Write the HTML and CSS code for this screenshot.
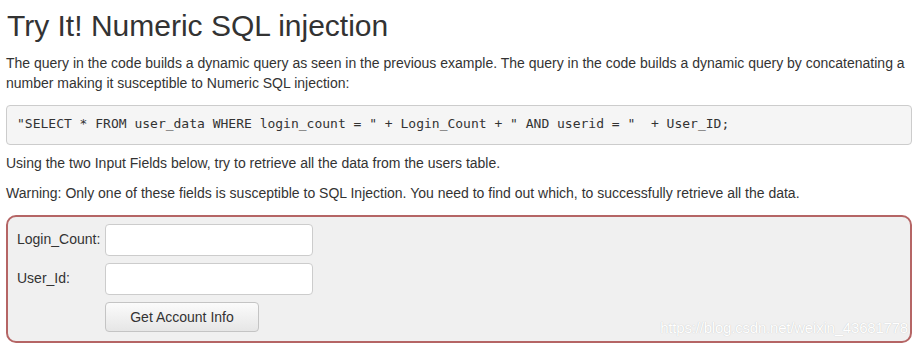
FILE: index.html
```html
<!DOCTYPE html>
<html lang="en">
<head>
  <meta charset="UTF-8" />
  <title>Numeric SQL injection</title>
  <link rel="stylesheet" href="styles.css">
</head>
<body>

<div class="lesson">
  <h2>Try It! Numeric SQL injection</h2>
  <p>The query in the code builds a dynamic query as seen in the previous example. The query in the code builds a dynamic query by concatenating a number making it susceptible to Numeric SQL injection:</p>

  <pre>"SELECT * FROM user_data WHERE login_count = " + Login_Count + " AND userid = "  + User_ID;</pre>

  <p>Using the two Input Fields below, try to retrieve all the data from the users table.</p>
  <p>Warning: Only one of these fields is susceptible to SQL Injection. You need to find out which, to successfully retrieve all the data.</p>

  <div class="attack-container">
    <form class="attack-form">
      <label for="login-count">Login_Count:</label>
      <input type="text" id="login-count" name="login_count" />
      <label for="user-id">User_Id:</label>
      <input type="text" id="user-id" name="userid" />
      <span></span>
      <input type="submit" value="Get Account Info" />
    </form>
    <!-- watermark from the screenshot -->
    <span class="watermark">https://blog.csdn.net/weixin_43681778</span>
  </div>
</div>

</body>
</html>
```

FILE: styles.css
```css
body {
  margin: 0;
  padding: 0;
  background: white;
  color: #333;
  font-family: 'Liberation Sans', Arial, sans-serif;
  font-size: 14px;
  line-height: 1.42857;
}
.lesson {
  padding: 0 6px;
}
h2 {
  font-size: 30px;
  font-weight: normal;
  line-height: 1.1;
  margin: 9px 0 12px 1px;
}
p {
  margin: 0 0 10px;
}
pre {
  font-family: 'DejaVu Sans Mono', monospace;
  font-size: 13px;
  line-height: 1.42857;
  background: #f5f5f5;
  border: 1px solid #ccc;
  border-radius: 4px;
  padding: 9.5px 10px;
  margin: 11px 0 9px;
  color: #333;
}
.attack-container {
  position: relative;
  background: #f0f0f0;
  border: 2px solid #b56565;
  border-radius: 10px;
  padding: 7px 8px 9px;
  margin-top: 11px;
}
.attack-form {
  display: grid;
  grid-template-columns: 85px 208px;
  column-gap: 4px;
  row-gap: 7px;
  align-items: center;
}
.attack-form label {
  padding-left: 1px;
}
.attack-form input[type="text"] {
  box-sizing: border-box;
  height: 32px;
  border: 1px solid #ccc;
  border-radius: 4px;
  background: white;
  padding: 6px 10px;
  font-family: inherit;
  font-size: 14px;
}
.attack-form input[type="submit"] {
  box-sizing: border-box;
  width: 154px;
  height: 30px;
  border: 1px solid #c4c4c4;
  border-radius: 4px;
  background: linear-gradient(#fbfbfb, #e6e6e6);
  color: #333;
  font-family: inherit;
  font-size: 14px;
}
.watermark {
  position: absolute;
  right: 2px;
  bottom: 2px;
  font-size: 15px;
  color: white;
  text-shadow: 0 0 1px #bbb;
  letter-spacing: -0.2px;
}
```
